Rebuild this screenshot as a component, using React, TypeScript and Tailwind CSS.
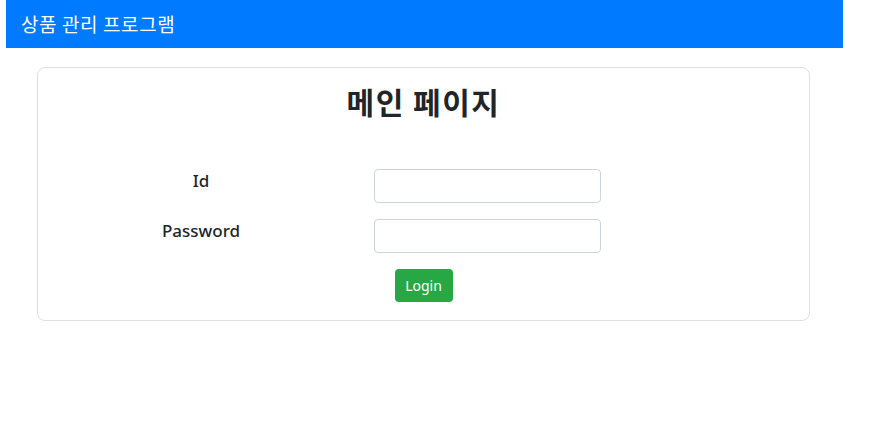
import React from "react";

export default function App() {
  return (
    <div
      className="w-[870px] h-[437px] bg-white text-[#212529]"
      style={{ fontFamily: '"Noto Sans", "Noto Sans CJK KR", sans-serif' }}
    >
      <div className="ml-[6px] w-[837px] h-[48px] bg-[#007bff] flex items-center pl-[15px]">
        <span
          className="text-white text-[19px] leading-none tracking-[0.6px] -mt-[1px]"
          style={{ fontFamily: '"Noto Sans CJK KR", sans-serif' }}
        >
          상품 관리 프로그램
        </span>
      </div>
      <div className="ml-[37px] mt-[19px] w-[773px] h-[254px] border border-[#dfdfdf] rounded-[8px] flex flex-col">
        <h2
          className="text-center text-[30px] font-bold leading-[34px] mt-[16px] tracking-[1.5px]"
          style={{ fontFamily: '"Noto Sans CJK KR", sans-serif' }}
        >
          메인 페이지
        </h2>
        <div className="mt-[51px] flex flex-col gap-[16px]">
          <div className="flex items-start">
            <label className="w-[326px] text-center text-[17px] font-medium leading-[24px]">Id</label>
            <input className="ml-[10px] w-[227px] h-[34px] border border-[#ced4da] rounded-[4px] bg-white outline-none" />
          </div>
          <div className="flex items-start">
            <label className="w-[326px] text-center text-[17px] font-medium leading-[24px]">Password</label>
            <input
              type="password"
              className="ml-[10px] w-[227px] h-[34px] border border-[#ced4da] rounded-[4px] bg-white outline-none"
            />
          </div>
          <div className="flex justify-center">
            <button className="w-[58px] h-[33px] bg-[#28a745] text-white text-[14px] rounded-[4px]">Login</button>
          </div>
        </div>
      </div>
    </div>
  );
}
